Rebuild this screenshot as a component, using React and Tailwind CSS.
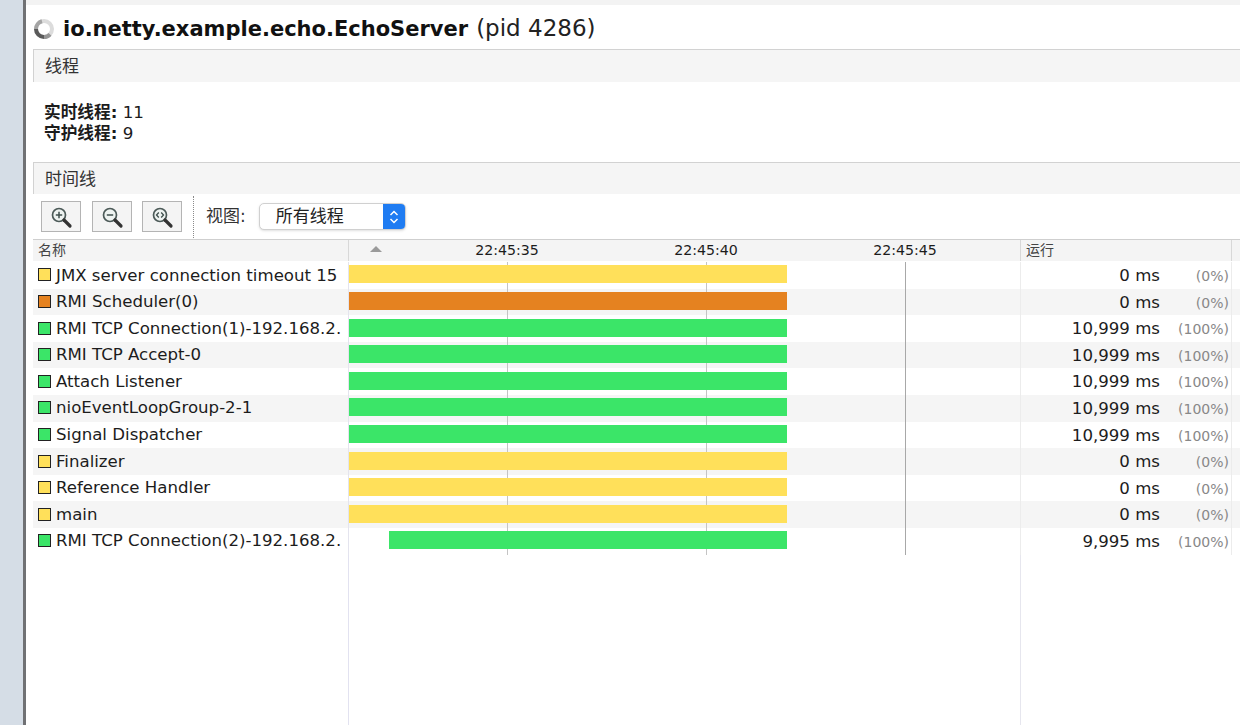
const threads = [
  { name: 'JMX server connection timeout 15', color: 'y', time: '0 ms', pct: '(0%)' },
  { name: 'RMI Scheduler(0)', color: 'o', time: '0 ms', pct: '(0%)' },
  { name: 'RMI TCP Connection(1)-192.168.2.', color: 'g', time: '10,999 ms', pct: '(100%)' },
  { name: 'RMI TCP Accept-0', color: 'g', time: '10,999 ms', pct: '(100%)' },
  { name: 'Attach Listener', color: 'g', time: '10,999 ms', pct: '(100%)' },
  { name: 'nioEventLoopGroup-2-1', color: 'g', time: '10,999 ms', pct: '(100%)' },
  { name: 'Signal Dispatcher', color: 'g', time: '10,999 ms', pct: '(100%)' },
  { name: 'Finalizer', color: 'y', time: '0 ms', pct: '(0%)' },
  { name: 'Reference Handler', color: 'y', time: '0 ms', pct: '(0%)' },
  { name: 'main', color: 'y', time: '0 ms', pct: '(0%)' },
  { name: 'RMI TCP Connection(2)-192.168.2.', color: 'g', time: '9,995 ms', pct: '(100%)', late: true },
];

const swatch = { y: 'bg-[#ffe05a]', o: 'bg-[#e58220]', g: 'bg-[#3be568]' };

const Spinner = () => (
  <svg width="22" height="22" viewBox="0 0 22 22" fill="none" strokeWidth="4">
    <circle cx="11" cy="11" r="8" stroke="#dcdcdc" />
    <path d="M3 11a8 8 0 0 1 6-7.7" stroke="#a4a4a4" />
    <path d="M3 11a8 8 0 0 0 8 8" stroke="#5a5a5a" />
    <path d="M11 19a8 8 0 0 0 6-2.7" stroke="#959595" />
  </svg>
);

const Zoom = ({ kind }) => (
  <svg width="24" height="24" viewBox="0 0 24 24" fill="none">
    <circle cx="10" cy="10" r="6.5" fill="#eef3f1" stroke="#4c5a58" strokeWidth="1.7" />
    <path d="M15 15l6 6" stroke="#333" strokeWidth="3.2" strokeLinecap="round" />
    {kind !== 'fit' && <path d="M6.8 10h6.4" stroke="#3f4f4d" strokeWidth="1.5" />}
    {kind === 'in' && <path d="M10 6.8v6.4" stroke="#3f4f4d" strokeWidth="1.5" />}
    {kind === 'fit' && <path d="M8.8 7.5L6.5 10l2.3 2.5M11.2 7.5l2.3 2.5-2.3 2.5" stroke="#3f4f4d" strokeWidth="1.3" />}
  </svg>
);

const ZoomButton = ({ kind }) => (
  <button className="w-10 h-[31px] flex items-center justify-center bg-[#f4f4f4] border border-[#b4b4b4]">
    <Zoom kind={kind} />
  </button>
);

const Section = ({ title, className }) => (
  <div className={`flex items-center pl-[11px] bg-[#f5f5f5] border-t border-l border-[#d2d2d2] text-[17px] text-[#333] ${className}`}>
    {title}
  </div>
);

const GridLines = () => (
  <>
    <div className="absolute inset-y-0 left-[158px] w-px bg-[#c4c4c4]" />
    <div className="absolute inset-y-0 left-[357px] w-px bg-[#c4c4c4]" />
    <div className="absolute inset-y-0 left-[556px] w-px bg-[#a8a8a8]" />
  </>
);

export default function App() {
  return (
    <div className="h-[725px] w-[1240px] overflow-hidden flex bg-white text-[#1c1c1c] font-['DejaVu_Sans','Noto_Sans_CJK_SC',sans-serif]">
      <div className="w-[23px] bg-[#d5dde6]" />
      <div className="w-[3px] bg-[#707174]" />

      <div className="flex-1 min-w-0 flex flex-col">
        <div className="h-[5px] bg-[#f3f3f3]" />
        <div className="h-11 flex items-center pl-[7px] gap-2 pt-[3px]">
          <Spinner />
          <h1 className="whitespace-nowrap flex items-baseline gap-2">
            <span className="text-[21px] font-bold text-[#111]">io.netty.example.echo.EchoServer</span>
            <span className="text-[23px] text-[#222]">(pid 4286)</span>
          </h1>
        </div>

        <div className="pl-[7px] flex-1 min-h-0 flex flex-col">
          <Section title="线程" className="h-[33px] pt-px" />
          <div className="h-[80px] pl-[11px] pt-5 text-[16.7px] leading-[21px]">
            <div><b>实时线程:</b> 11</div>
            <div><b>守护线程:</b> 9</div>
          </div>

          <Section title="时间线" className="h-[32px] pt-[3px]" />
          <div className="h-[45px] flex items-center pl-2">
            <div className="flex gap-[10.5px]">
              <ZoomButton kind="in" />
              <ZoomButton kind="out" />
              <ZoomButton kind="fit" />
            </div>
            <div className="ml-[11px] h-[42px] border-l border-dotted border-[#8a8a8a]" />
            <span className="ml-3 text-[17px] text-[#333]">视图:</span>
            <div className="ml-[13px] w-[147px] h-[27px] flex items-stretch rounded-[5px] border border-[#d0d0d0] bg-white overflow-hidden shadow-sm">
              <span className="flex-1 pl-4 text-[17px] leading-[24px] text-[#222]">所有线程</span>
              <span className="w-[22px] bg-[#1f7cf2] flex items-center justify-center">
                <svg width="12" height="18" viewBox="0 0 12 18" fill="none" stroke="#fff" strokeWidth="1.5">
                  <path d="M2.5 7L6 3.5 9.5 7M2.5 11L6 14.5 9.5 11" />
                </svg>
              </span>
            </div>
          </div>

          <div className="h-[22px] grid grid-cols-[315px_672px_211px_1fr] bg-[#f4f4f4] border-t border-[#cfcfcf] text-[14px] text-[#444]">
            <div className="pl-[5px] leading-[20px]">名称</div>
            <div className="relative border-l border-[#d8d8d8] text-[14.2px] text-[#1c1c1c]">
              <svg className="absolute left-5 top-[5px]" width="14" height="8" viewBox="0 0 14 8"><path d="M7 1l6 6H1z" fill="#9a9a9a" /></svg>
              <span className="absolute left-[158px] -translate-x-1/2 leading-[20px]">22:45:35</span>
              <span className="absolute left-[357px] -translate-x-1/2 leading-[20px]">22:45:40</span>
              <span className="absolute left-[556px] -translate-x-1/2 leading-[20px]">22:45:45</span>
            </div>
            <div className="pl-[5px] border-l border-[#d8d8d8] leading-[20px]">运行</div>
            <div className="border-l border-[#d8d8d8]" />
          </div>

          <div className="flex flex-col pt-px">
            {threads.map((t, i) => (
              <div key={t.name + i} className={`h-[26.6px] grid grid-cols-[315px_672px_211px_1fr] items-stretch ${i % 2 ? 'bg-[#f5f5f5]' : 'bg-white'}`}>
                <div className="flex items-center pl-[5px] pt-px gap-[5px] whitespace-nowrap overflow-hidden text-[16.6px]">
                  <span className={`w-[13px] h-[13px] shrink-0 -mt-[2px] border border-[#222] ${swatch[t.color]}`} />
                  <span>{t.name}</span>
                </div>
                <div className="relative flex items-center border-l border-[#e4e4ee]">
                  <GridLines />
                  <div className={`relative h-[18px] -mt-[2px] ${swatch[t.color]} ${t.late ? 'ml-[40px] w-[398px]' : 'ml-0 w-[438px]'}`} />
                </div>
                <div className="flex items-center pt-[2px] border-l border-[#ececec] text-[16.6px]">
                  <span className="w-[139px] text-right">{t.time}</span>
                  <span className="w-[69px] text-right text-[#888] text-[14px]">{t.pct}</span>
                </div>
                <div className="border-l border-[#ececec]" />
              </div>
            ))}
          </div>

          <div className="flex-1 grid grid-cols-[315px_672px_211px_1fr]">
            <div />
            <div className="border-l border-[#e2e2f0]" />
            <div className="border-l border-[#e6e6ee]" />
            <div />
          </div>
        </div>
      </div>
    </div>
  );
}
